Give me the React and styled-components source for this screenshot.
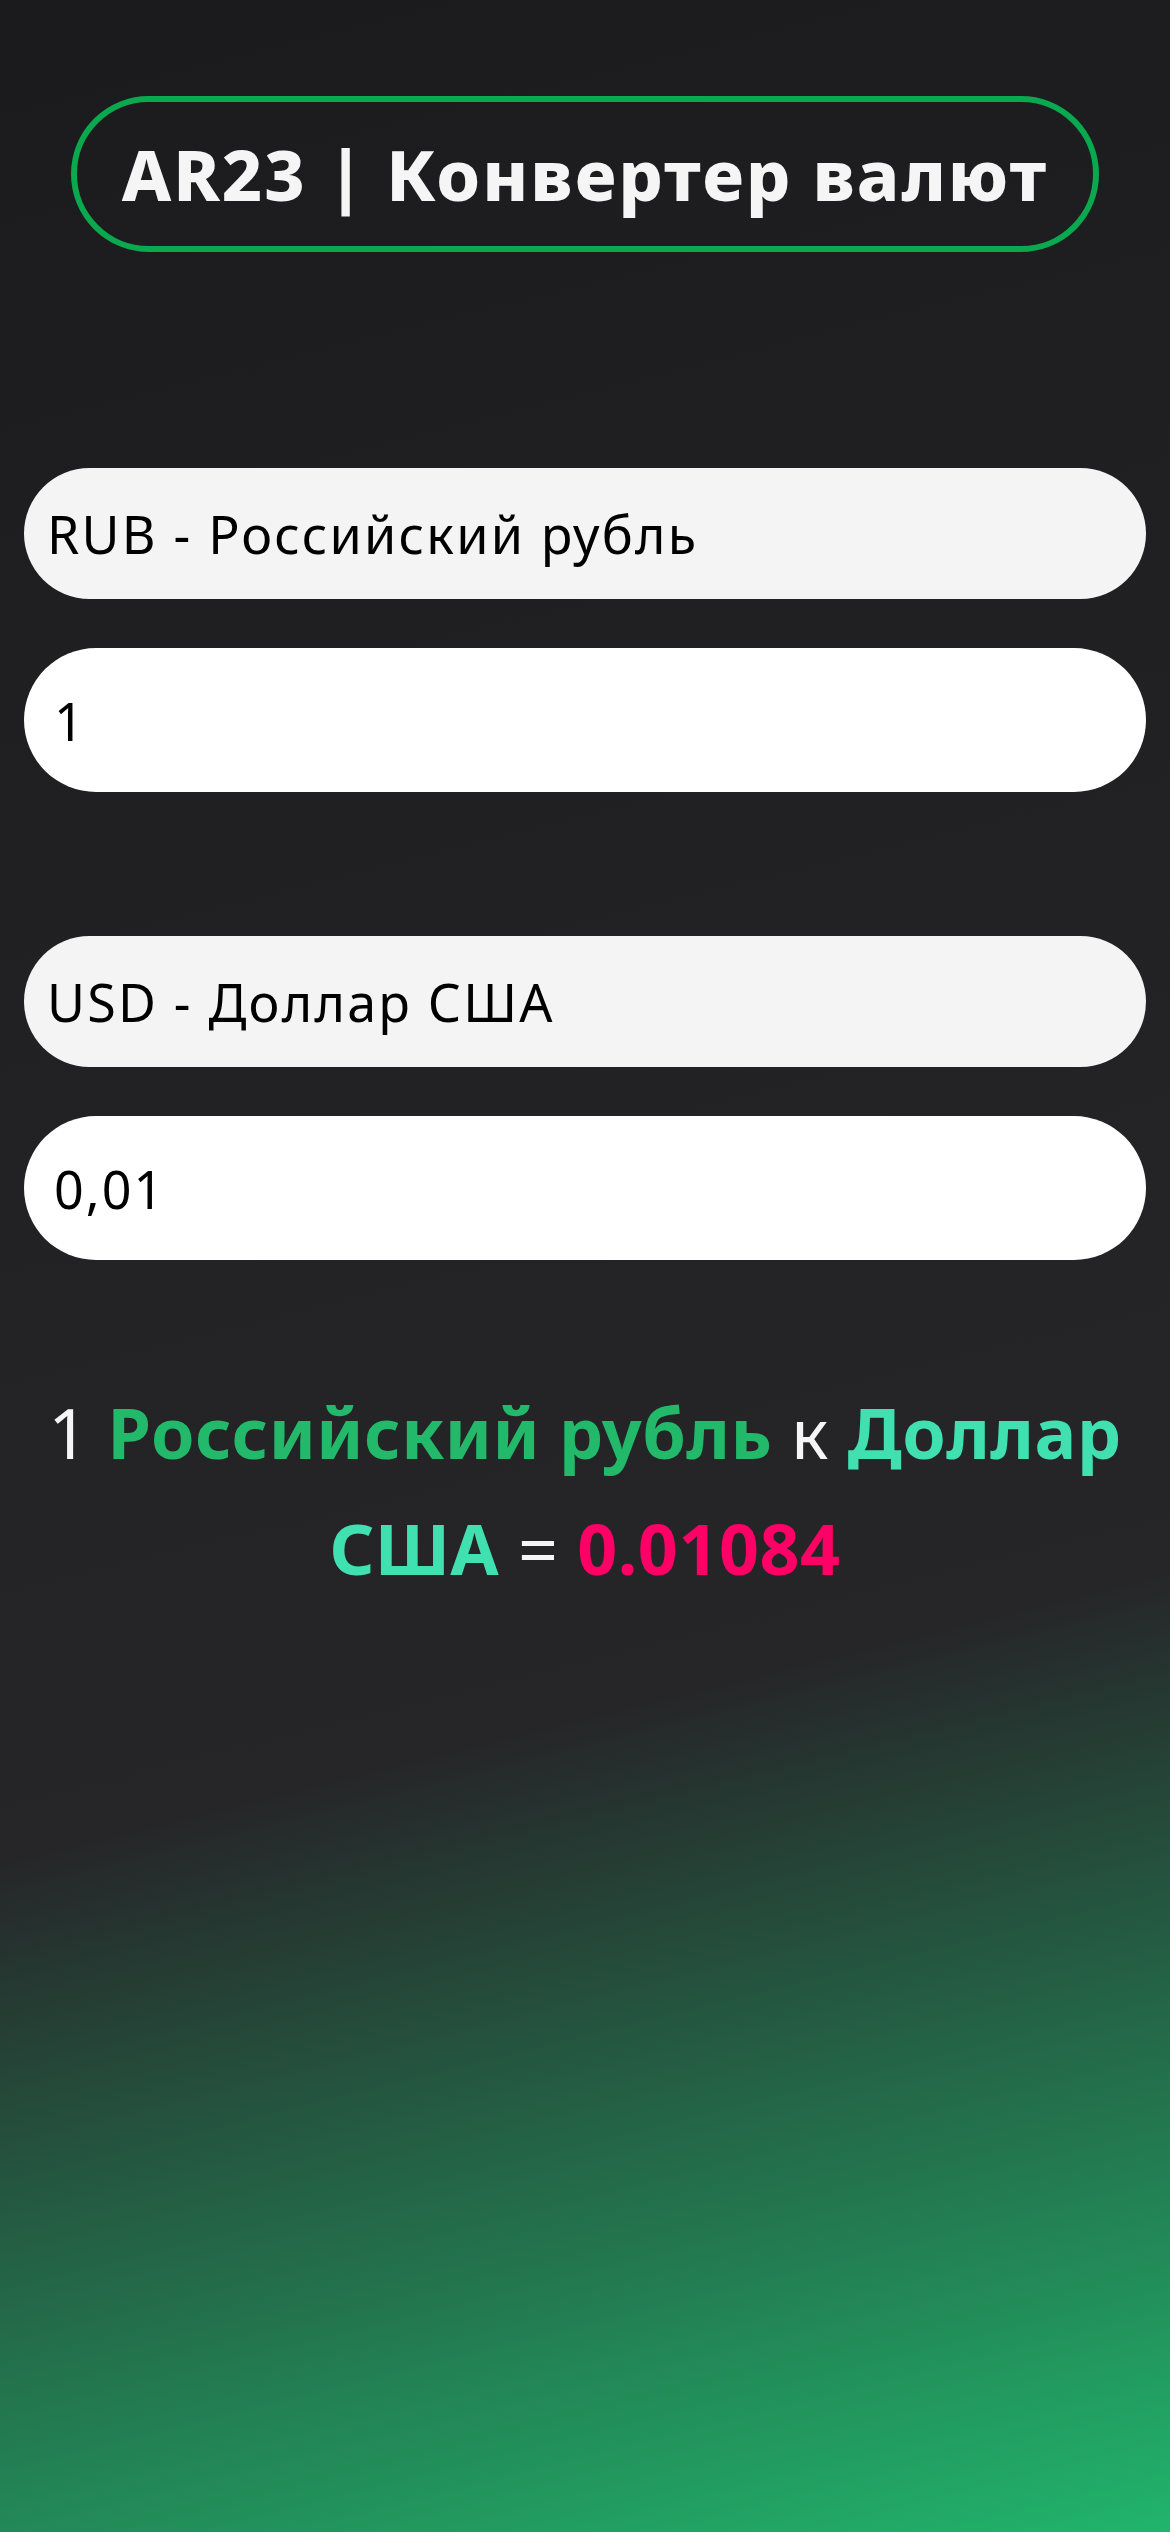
import React from "react";
import styled, { createGlobalStyle } from "styled-components";

const GlobalStyle = createGlobalStyle`
  * {
    box-sizing: border-box;
  }
  html,
  body {
    margin: 0;
    padding: 0;
  }
  body {
    min-height: 2532px;
    font-family: "Noto Sans", "Open Sans", sans-serif;
    background: linear-gradient(166deg, #1b1b1d 0%, #262629 66%, #21b46c 100%);
    background-repeat: no-repeat;
  }
`;

const App = () => {
  return (
    <>
      <GlobalStyle />
      <Page>
        <Header>
          <Title>AR23 | Конвертер валют</Title>
        </Header>

        <Form>
          <Group>
            <Select defaultValue="RUB">
              <option value="RUB">RUB - Российский рубль</option>
            </Select>
            <Amount type="text" defaultValue="1" />
          </Group>

          <Group>
            <Select defaultValue="USD">
              <option value="USD">USD - Доллар США</option>
            </Select>
            <Amount type="text" defaultValue="0,01" />
          </Group>
        </Form>

        <Result>
          1 <From>Российский рубль</From> к <To>Доллар США</To> ={" "}
          <Rate>0.01084</Rate>
        </Result>
      </Page>
    </>
  );
};

const Page = styled.main`
  min-height: 2532px;
  padding: 96px 24px 0;
  display: flex;
  flex-direction: column;
`;

const Header = styled.header`
  display: flex;
  justify-content: center;
`;

const Title = styled.h1`
  margin: 0;
  width: 1028px;
  height: 156px;
  display: flex;
  align-items: center;
  justify-content: center;
  border: 6px solid #0aa84f;
  border-radius: 80px;
  color: #f5f5f5;
  font-size: 70px;
  font-weight: 800;
  letter-spacing: 2px;
  white-space: nowrap;
`;

const Form = styled.section`
  margin-top: 216px;
  display: flex;
  flex-direction: column;
  gap: 144px;
`;

const Group = styled.div`
  display: flex;
  flex-direction: column;
  gap: 49px;
`;

const Select = styled.select`
  appearance: none;
  -webkit-appearance: none;
  width: 100%;
  height: 131px;
  padding: 0 0 0 23px;
  border: none;
  border-radius: 66px;
  background: #f4f4f4;
  color: #000;
  font-family: inherit;
  font-size: 52px;
  letter-spacing: 2.2px;
  outline: none;
`;

const Amount = styled.input`
  width: 100%;
  height: 144px;
  padding: 0 0 0 30px;
  border: none;
  border-radius: 72px;
  background: #fff;
  color: #000;
  font-family: inherit;
  font-size: 52px;
  letter-spacing: 2px;
  outline: none;
`;

const Result = styled.p`
  margin: 114px 0 0;
  text-align: center;
  color: #f5f5f5;
  font-size: 70px;
  line-height: 116px;
  letter-spacing: 0.5px;
`;

const From = styled.b`
  color: #22b96b;
  font-weight: 700;
`;

const To = styled.b`
  color: #40e0b0;
  font-weight: 700;
`;

const Rate = styled.b`
  color: #ff0066;
  font-weight: 700;
`;

export default App;
